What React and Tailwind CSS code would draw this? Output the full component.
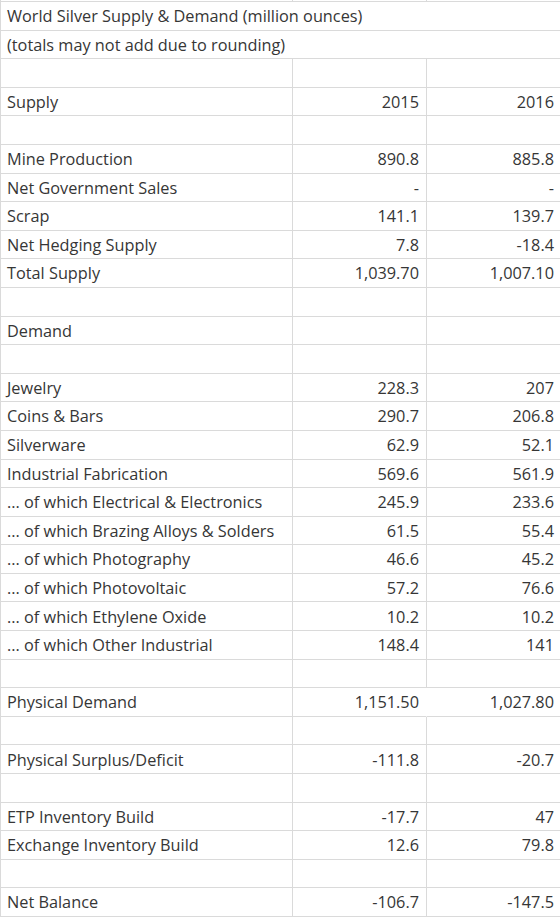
import React from 'react'

const rows = [
    { title: 'World Silver Supply & Demand (million ounces)' },
    { title: '(totals may not add due to rounding)' },
    {},
    { label: 'Supply', a: '2015', b: '2016' },
    {},
    { label: 'Mine Production', a: '890.8', b: '885.8' },
    { label: 'Net Government Sales', a: '-', b: '-' },
    { label: 'Scrap', a: '141.1', b: '139.7' },
    { label: 'Net Hedging Supply', a: '7.8', b: '-18.4' },
    { label: 'Total Supply', a: '1,039.70', b: '1,007.10' },
    {},
    { label: 'Demand' },
    {},
    { label: 'Jewelry', a: '228.3', b: '207' },
    { label: 'Coins & Bars', a: '290.7', b: '206.8' },
    { label: 'Silverware', a: '62.9', b: '52.1' },
    { label: 'Industrial Fabrication', a: '569.6', b: '561.9' },
    { label: '... of which Electrical & Electronics', a: '245.9', b: '233.6' },
    { label: '... of which Brazing Alloys & Solders', a: '61.5', b: '55.4' },
    { label: '... of which Photography', a: '46.6', b: '45.2' },
    { label: '... of which Photovoltaic', a: '57.2', b: '76.6' },
    { label: '... of which Ethylene Oxide', a: '10.2', b: '10.2' },
    { label: '... of which Other Industrial', a: '148.4', b: '141' },
    {},
    { label: 'Physical Demand', a: '1,151.50', b: '1,027.80', noMid: true },
    {},
    { label: 'Physical Surplus/Deficit', a: '-111.8', b: '-20.7' },
    {},
    { label: 'ETP Inventory Build', a: '-17.7', b: '47' },
    { label: 'Exchange Inventory Build', a: '12.6', b: '79.8' },
    {},
    { label: 'Net Balance', a: '-106.7', b: '-147.5' },
]

const cell = 'h-[28.6px] flex items-center pt-[1px] border-b border-[#dadada]'

export default function App() {
    return (
        <div className="w-[560px] h-[919px] overflow-hidden bg-white text-[#363636] text-[16.3px] font-['Open_Sans',sans-serif]">
            <div className="grid grid-cols-[293px_134px_1fr]">
                {/* partial row above the sheet */}
                <div className="h-[2px] border-r border-b border-l border-[#dadada]" />
                <div className="h-[2px] border-r border-b border-[#dadada]" />
                <div className="h-[2px] border-b border-[#dadada]" />

                {rows.map((r, i) => (
                    r.title ? (
                        <div key={i} className={`${cell} col-span-3 pl-[6px] whitespace-nowrap border-l`}>
                            {r.title}
                        </div>
                    ) : (
                        <React.Fragment key={i}>
                            <div className={`${cell} border-l border-r pl-[6px] whitespace-nowrap`}>{r.label}</div>
                            <div className={`${cell} justify-end pr-[7px] ${r.noMid ? 'border-r border-r-white' : 'border-r'}`}>{r.a}</div>
                            <div className={`${cell} justify-end pr-[6px]`}>{r.b}</div>
                        </React.Fragment>
                    )
                ))}
            </div>
        </div>
    )
}
